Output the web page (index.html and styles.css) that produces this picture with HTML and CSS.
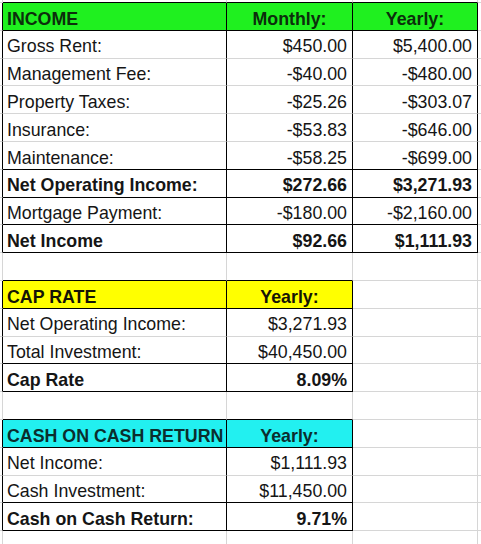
FILE: index.html
```html
<!DOCTYPE html>
<html>
<head>
<meta charset="utf-8">
<link rel="stylesheet" href="styles.css">
</head>
<body>
<div class="sheet">
  <div class="row top line3"><div class="c"></div><div class="c"></div><div class="c"></div><div class="c"></div><div class="c"></div></div>

  <div class="row in3 line3 hdr-g"><div class="c"></div><div class="c lbl b">INCOME</div><div class="c ctr b">Monthly:</div><div class="c ctr b">Yearly:</div><div class="c"></div></div>
  <div class="row in3"><div class="c"></div><div class="c lbl">Gross Rent:</div><div class="c num">$450.00</div><div class="c num">$5,400.00</div><div class="c"></div></div>
  <div class="row in3"><div class="c"></div><div class="c lbl">Management Fee:</div><div class="c num">-$40.00</div><div class="c num">-$480.00</div><div class="c"></div></div>
  <div class="row in3"><div class="c"></div><div class="c lbl">Property Taxes:</div><div class="c num">-$25.26</div><div class="c num">-$303.07</div><div class="c"></div></div>
  <div class="row in3"><div class="c"></div><div class="c lbl">Insurance:</div><div class="c num">-$53.83</div><div class="c num">-$646.00</div><div class="c"></div></div>
  <div class="row in3 line3"><div class="c"></div><div class="c lbl">Maintenance:</div><div class="c num">-$58.25</div><div class="c num">-$699.00</div><div class="c"></div></div>
  <div class="row in3 line3"><div class="c"></div><div class="c lbl b">Net Operating Income:</div><div class="c num b">$272.66</div><div class="c num b">$3,271.93</div><div class="c"></div></div>
  <div class="row in3 line3"><div class="c"></div><div class="c lbl">Mortgage Payment:</div><div class="c num">-$180.00</div><div class="c num">-$2,160.00</div><div class="c"></div></div>
  <div class="row in3 line3"><div class="c"></div><div class="c lbl b">Net Income</div><div class="c num b">$92.66</div><div class="c num b">$1,111.93</div><div class="c"></div></div>

  <div class="row line2"><div class="c"></div><div class="c"></div><div class="c"></div><div class="c"></div><div class="c"></div></div>

  <div class="row in2 line2 hdr-y"><div class="c"></div><div class="c lbl b">CAP RATE</div><div class="c ctr b">Yearly:</div><div class="c"></div><div class="c"></div></div>
  <div class="row in2"><div class="c"></div><div class="c lbl">Net Operating Income:</div><div class="c num">$3,271.93</div><div class="c"></div><div class="c"></div></div>
  <div class="row in2 line2"><div class="c"></div><div class="c lbl">Total Investment:</div><div class="c num">$40,450.00</div><div class="c"></div><div class="c"></div></div>
  <div class="row in2 line2"><div class="c"></div><div class="c lbl b">Cap Rate</div><div class="c num b">8.09%</div><div class="c"></div><div class="c"></div></div>

  <div class="row line2"><div class="c"></div><div class="c"></div><div class="c"></div><div class="c"></div><div class="c"></div></div>

  <div class="row in2 line2 hdr-c"><div class="c"></div><div class="c lbl b">CASH ON CASH RETURN</div><div class="c ctr b">Yearly:</div><div class="c"></div><div class="c"></div></div>
  <div class="row in2"><div class="c"></div><div class="c lbl">Net Income:</div><div class="c num">$1,111.93</div><div class="c"></div><div class="c"></div></div>
  <div class="row in2 line2"><div class="c"></div><div class="c lbl">Cash Investment:</div><div class="c num">$11,450.00</div><div class="c"></div><div class="c"></div></div>
  <div class="row in2 line2"><div class="c"></div><div class="c lbl b">Cash on Cash Return:</div><div class="c num b">9.71%</div><div class="c"></div><div class="c"></div></div>

  <div class="row"><div class="c"></div><div class="c"></div><div class="c"></div><div class="c"></div><div class="c"></div></div>
</div>
</body>
</html>
```

FILE: styles.css
```css
* {
  box-sizing: border-box;
}

html, body {
  margin: 0;
  padding: 0;
  background: #ffffff;
}

body {
  width: 481px;
  height: 544px;
  overflow: hidden;
  font-family: "Liberation Sans", Arial, sans-serif;
  font-size: 17.8px;
  color: #151515;
}

.sheet {
  display: flex;
  flex-direction: column;
}

.row {
  flex: none;
  display: grid;
  grid-template-columns: 3px 224px 126px 125px 1fr;
  height: 27.8px;
}

.row.top {
  height: 3px;
}

.c {
  display: flex;
  align-items: flex-end;
  padding-bottom: 1.2px;
  line-height: 20px;
  white-space: nowrap;
  overflow: hidden;
  border-right: 1px solid #d6d6d6;
  border-bottom: 1px solid #d6d6d6;
}

.c:last-child {
  border-right: none;
}

.lbl {
  padding-left: 4px;
}

.num {
  justify-content: flex-end;
  padding-right: 5px;
}

.ctr {
  justify-content: center;
}

.b {
  font-weight: bold;
}

/* black table rules */
.in3 > .c:nth-child(-n+4) {
  border-right-color: #000;
}

.in2 > .c:nth-child(-n+3) {
  border-right-color: #000;
}

.line3 > .c:nth-child(n+2):nth-child(-n+4) {
  border-bottom-color: #000;
}

.line2 > .c:nth-child(n+2):nth-child(-n+3) {
  border-bottom-color: #000;
}

/* header fills */
.hdr-g > .c:nth-child(n+2):nth-child(-n+4) {
  background: #1ff01f;
  color: #0c2e0c;
}

.hdr-y > .c:nth-child(n+2):nth-child(-n+3) {
  background: #ffff00;
  color: #151505;
}

.hdr-c > .c:nth-child(n+2):nth-child(-n+3) {
  background: #22f0f0;
  color: #0b2e2e;
}
```
